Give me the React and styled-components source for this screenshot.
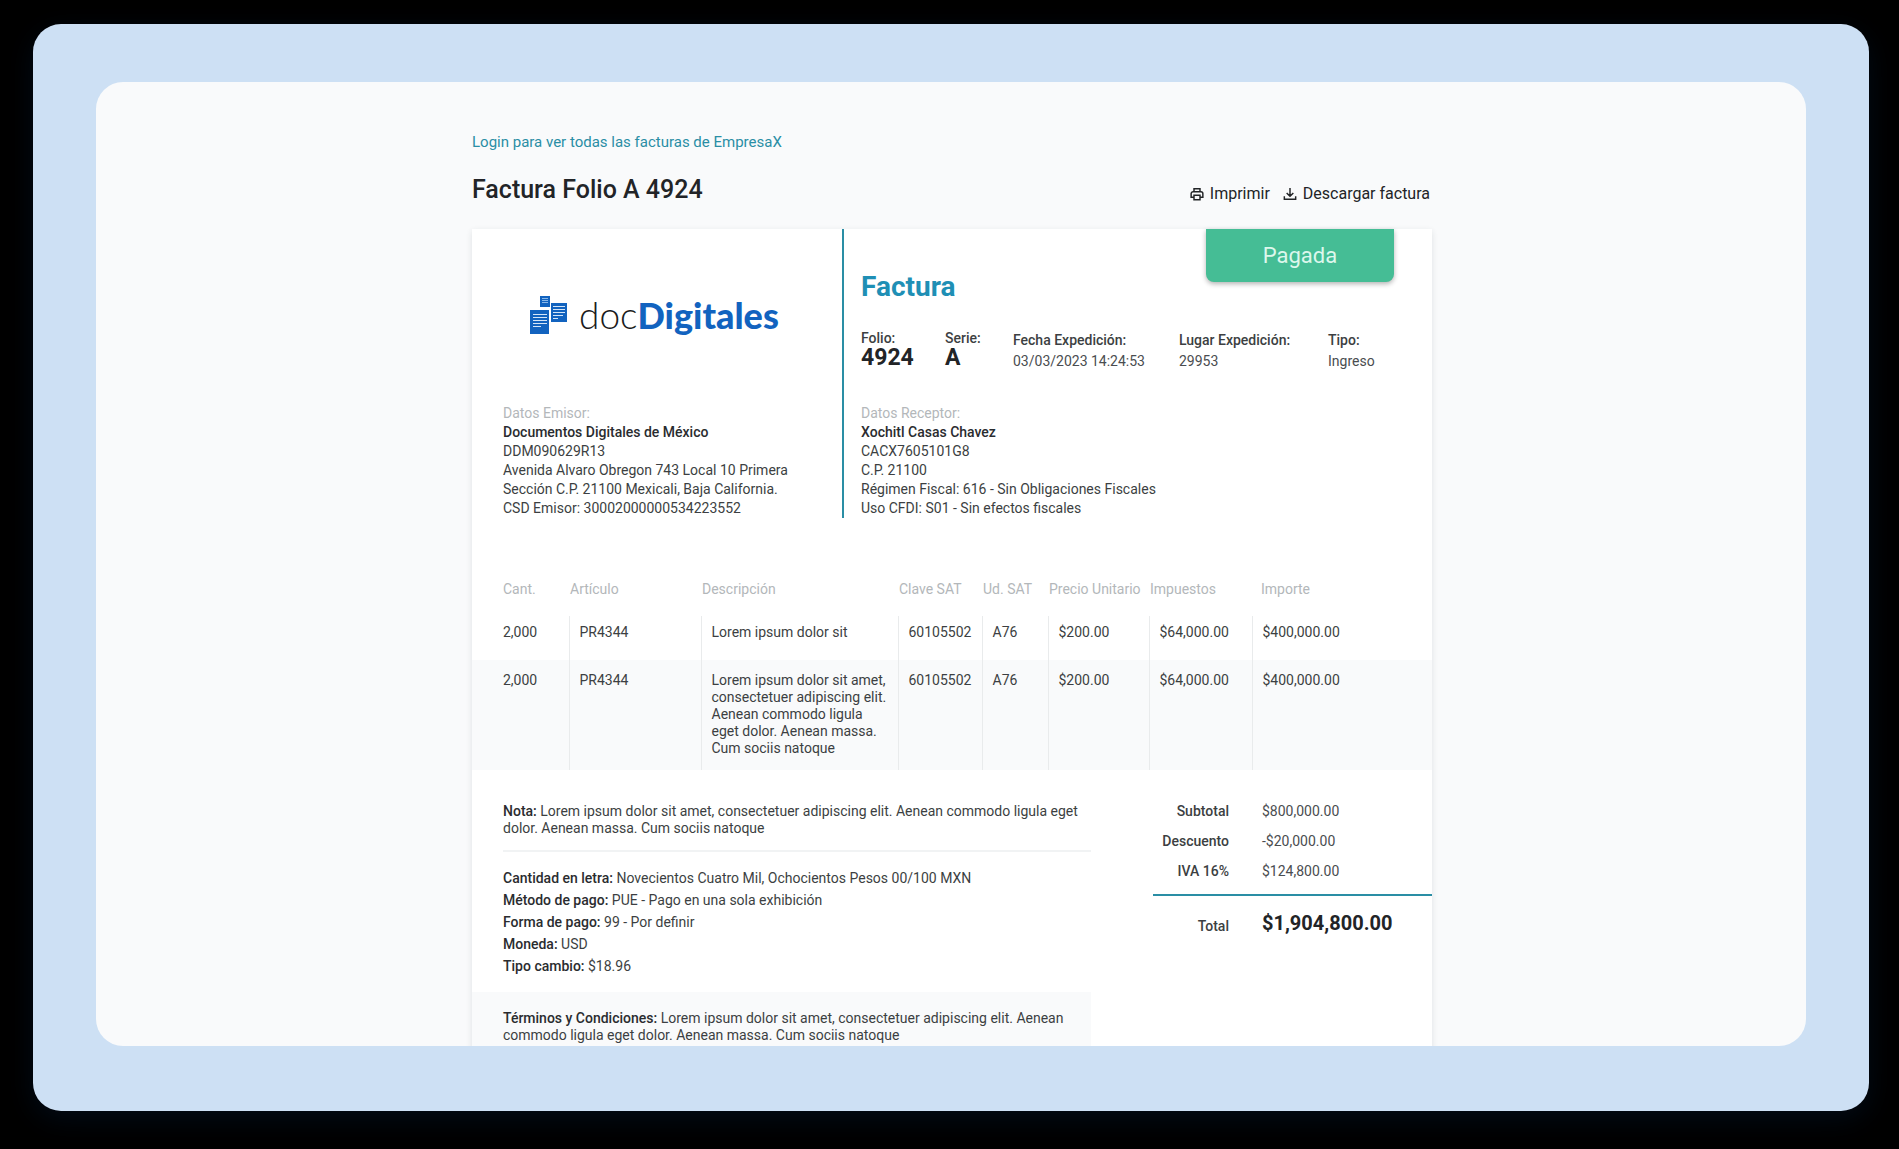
import React from "react";
import styled, { createGlobalStyle } from "styled-components";

const GlobalStyle = createGlobalStyle`
  * {
    box-sizing: border-box;
  }
  body {
    margin: 0;
    background: #000;
    font-family: Roboto, "Liberation Sans", sans-serif;
    color: #222427;
  }
`;

const Stage = styled.div`
  display: flex;
  height: 100vh;
  padding: 24px 30px 38px 33px;
`;

const Frame = styled.div`
  display: flex;
  flex: 1;
  padding: 58px 63px 65px;
  border-radius: 28px;
  background: #cde0f4;
  box-shadow: 0 8px 28px #020b16;
`;

const Screen = styled.main`
  flex: 1;
  padding: 48px 20px 0 22px;
  border-radius: 27px;
  background: #f9fafb;
  overflow: hidden;
`;

const Content = styled.div`
  max-width: 960px;
  margin: 0 auto;
`;

const LoginLink = styled.a`
  display: block;
  font-size: 15px;
  line-height: 24px;
  color: #2a8ea5;
  text-decoration: none;
`;

const TitleBar = styled.header`
  display: flex;
  justify-content: space-between;
  align-items: center;
  padding: 19px 0 22px;
  h1 {
    margin: 0;
    font-size: 25px;
    line-height: 34px;
    font-weight: 500;
  }
`;

const Actions = styled.div`
  display: flex;
  gap: 12px;
  padding: 8px 2px 0 0;
`;

const ActionButton = styled.button`
  display: flex;
  align-items: center;
  gap: 5px;
  padding: 0;
  border: 0;
  background: none;
  font: inherit;
  font-size: 16px;
  line-height: 20px;
  color: #222427;
  cursor: pointer;
`;

const Paper = styled.article`
  background: #fff;
  box-shadow: 0 2px 6px rgba(30, 50, 60, 0.12);
  font-size: 14px;
  color: #3c3f42;
  strong {
    font-weight: 500;
    color: #2a2c2f;
  }
`;

const Top = styled.section`
  display: grid;
  grid-template-columns: 370px 1fr;
  height: 289px;
`;

const Issuer = styled.div`
  display: flex;
  flex-direction: column;
  justify-content: space-between;
  padding: 61px 31px 0;
`;

const Logo = styled.div`
  display: flex;
  align-items: center;
  gap: 12px;
  padding-left: 27px;
  font-family: Lato, "Open Sans", sans-serif;
  font-size: 37px;
  line-height: 50px;
  font-weight: 300;
  color: #1b1b1b;
  b {
    font-weight: 900;
    font-size: 36px;
    color: #1263bf;
  }
`;

const Receiver = styled.div`
  position: relative;
  display: flex;
  flex-direction: column;
  justify-content: space-between;
  padding: 40px 31px 0 17px;
  border-left: 2px solid #2a8ea5;
  h2 {
    margin: 0;
    font-size: 28px;
    line-height: 36px;
    font-weight: 700;
    color: #1f8fb5;
  }
`;

const Badge = styled.span`
  position: absolute;
  top: 0;
  right: 38px;
  width: 188px;
  border-radius: 0 0 8px 8px;
  background: #45bd95;
  box-shadow: 0 2px 5px rgba(0, 0, 0, 0.3);
  font-size: 22px;
  line-height: 53px;
  text-align: center;
  color: #dcf7ec;
`;

const Meta = styled.dl`
  display: grid;
  grid-template-columns: 84px 68px 166px 149px 1fr;
  margin: 0 0 7px;
  dd {
    margin: 0;
  }
`;

const MetaItem = styled.div`
  white-space: nowrap;
  dt {
    font-weight: 500;
    line-height: ${p => (p.$big ? "17px" : "20px")};
  }
  dd {
    font-size: ${p => (p.$big ? "23px" : "14px")};
    font-weight: ${p => (p.$big ? 700 : 400)};
    line-height: 22px;
    color: ${p => (p.$big ? "#222427" : "#4a4d50")};
  }
`;

const Party = styled.address`
  font-style: normal;
  line-height: 19px;
  h3 {
    margin: 0;
    font: inherit;
    color: #b3b7ba;
  }
`;

const Items = styled.table`
  width: 100%;
  margin-top: 60px;
  table-layout: fixed;
  border-collapse: collapse;
  line-height: 17px;
  text-align: left;
  th {
    padding: 3px 0 18px 1px;
    font-weight: 400;
    color: #b3b7ba;
    white-space: nowrap;
  }
  td {
    padding: 12px 0 13px 10px;
    vertical-align: top;
    border-left: 1px solid #e9ebec;
  }
  tbody tr:first-child td {
    padding: 8px 0 19px 10px;
  }
  tbody tr:nth-child(even) {
    background: #f9fafb;
  }
  tbody tr td:nth-child(3) {
    padding-right: 8px;
  }
  th:first-child,
  tbody td:first-child,
  tbody tr:first-child td:first-child {
    padding-left: 31px;
    border-left: 0;
  }
  th:last-child {
    padding-left: 9px;
  }
`;

const Bottom = styled.section`
  display: grid;
  grid-template-columns: 1fr 279px;
  gap: 62px;
  padding-top: 26px;
`;

const Note = styled.p`
  margin: 0 0 0 31px;
  padding: 7px 0 13px;
  border-bottom: 2px solid #f1f3f4;
  line-height: 17px;
`;

const Details = styled.ul`
  margin: 0;
  padding: 15px 0 15px 31px;
  list-style: none;
  line-height: 22px;
`;

const Terms = styled.p`
  margin: 0;
  padding: 18px 16px 18px 31px;
  background: #f9fafb;
  line-height: 17px;
`;

const Totals = styled.dl`
  margin: 0;
`;

const TotalRow = styled.div`
  display: grid;
  grid-template-columns: 76px 1fr;
  gap: 33px;
  line-height: 30px;
  dt {
    font-weight: 500;
    text-align: right;
    white-space: nowrap;
  }
  dd {
    margin: 0;
    color: #4a4d50;
  }
`;

const GrandTotal = styled(TotalRow)`
  margin-top: 8px;
  border-top: 2px solid #2a8ea5;
  dt {
    line-height: 60px;
  }
  dd {
    font-size: 20px;
    font-weight: 700;
    line-height: 54px;
    color: #222427;
  }
`;

const columns = [
  ["Cant.", 97],
  ["Artículo", 132],
  ["Descripción", 197],
  ["Clave SAT", 84],
  ["Ud. SAT", 66],
  ["Precio Unitario", 101],
  ["Impuestos", 103],
  ["Importe", 180]
];

const rows = [
  ["2,000", "PR4344", "Lorem ipsum dolor sit", "60105502", "A76", "$200.00", "$64,000.00", "$400,000.00"],
  [
    "2,000",
    "PR4344",
    "Lorem ipsum dolor sit amet, consectetuer adipiscing elit. Aenean commodo ligula eget dolor. Aenean massa. Cum sociis natoque",
    "60105502",
    "A76",
    "$200.00",
    "$64,000.00",
    "$400,000.00"
  ]
];

const meta = [
  ["Folio:", "4924", true],
  ["Serie:", "A", true],
  ["Fecha Expedición:", "03/03/2023 14:24:53"],
  ["Lugar Expedición:", "29953"],
  ["Tipo:", "Ingreso"]
];

const details = [
  ["Cantidad en letra:", "Novecientos Cuatro Mil, Ochocientos Pesos 00/100 MXN"],
  ["Método de pago:", "PUE - Pago en una sola exhibición"],
  ["Forma de pago:", "99 - Por definir"],
  ["Moneda:", "USD"],
  ["Tipo cambio:", "$18.96"]
];

const totals = [
  ["Subtotal", "$800,000.00"],
  ["Descuento", "-$20,000.00"],
  ["IVA 16%", "$124,800.00"]
];

const LogoMark = () => (
  <svg width="37" height="38" viewBox="0 0 37 38" aria-hidden="true">
    <path fill="#1263bf" d="M0 14h19v24H0zM21 7h16v19H21zM10 0h10v11H10z" />
    <path
      stroke="#d5e6f8"
      strokeWidth="1"
      d="M3 18.500h14M3 21.500h14M3 24.500h14M3 27.500h14M3 30.500h8M23 10.500h12M23 13.500h12M23 16.500h12M23 19.500h10M23 22.500h5"
    />
    <path stroke="#8ab8e8" strokeWidth="1" d="M12 2.500h6M12 4.500h6M12 6.500h6" />
  </svg>
);

const PrintIcon = () => (
  <svg width="16" height="16" viewBox="0 0 24 24" fill="none" stroke="currentColor" strokeWidth="2.2" aria-hidden="true">
    <path d="M7.500 8.500V4h9v4.500M7 17H3.200v-5.500a3 3 0 0 1 3-3h11.600a3 3 0 0 1 3 3V17H17M7.500 14h9v6.500h-9z" />
  </svg>
);

const DownloadIcon = () => (
  <svg width="16" height="16" viewBox="0 0 24 24" fill="none" stroke="currentColor" strokeWidth="2.2" aria-hidden="true">
    <path d="M12 3v12M7 10.500l5 5 5-5M3.500 15.500V20h17v-4.500" />
  </svg>
);

export default class App extends React.Component {
  render() {
    return (
      <Stage>
        <GlobalStyle />
        <Frame>
          <Screen>
            <Content>
              <LoginLink href="#login">Login para ver todas las facturas de EmpresaX</LoginLink>
              <TitleBar>
                <h1>Factura Folio A 4924</h1>
                <Actions>
                  <ActionButton type="button">
                    <PrintIcon />
                    Imprimir
                  </ActionButton>
                  <ActionButton type="button">
                    <DownloadIcon />
                    Descargar factura
                  </ActionButton>
                </Actions>
              </TitleBar>
              <Paper>
                <Top>
                  <Issuer>
                    <Logo>
                      <LogoMark />
                      <span>
                        doc<b>Digitales</b>
                      </span>
                    </Logo>
                    <Party>
                      <h3>Datos Emisor:</h3>
                      <strong>Documentos Digitales de México</strong>
                      <div>DDM090629R13</div>
                      <div>Avenida Alvaro Obregon 743 Local 10 Primera</div>
                      <div>Sección C.P. 21100 Mexicali, Baja California.</div>
                      <div>CSD Emisor: 30002000000534223552</div>
                    </Party>
                  </Issuer>
                  <Receiver>
                    <Badge>Pagada</Badge>
                    <h2>Factura</h2>
                    <Meta>
                      {meta.map(([label, value, big]) => (
                        <MetaItem key={label} $big={big}>
                          <dt>{label}</dt>
                          <dd>{value}</dd>
                        </MetaItem>
                      ))}
                    </Meta>
                    <Party>
                      <h3>Datos Receptor:</h3>
                      <strong>Xochitl Casas Chavez</strong>
                      <div>CACX7605101G8</div>
                      <div>C.P. 21100</div>
                      <div>Régimen Fiscal: 616 - Sin Obligaciones Fiscales</div>
                      <div>Uso CFDI: S01 - Sin efectos fiscales</div>
                    </Party>
                  </Receiver>
                </Top>
                <Items>
                  <colgroup>
                    {columns.map(([name, width]) => (
                      <col key={name} width={width} />
                    ))}
                  </colgroup>
                  <thead>
                    <tr>
                      {columns.map(([name]) => (
                        <th key={name} scope="col">
                          {name}
                        </th>
                      ))}
                    </tr>
                  </thead>
                  <tbody>
                    {rows.map((row, i) => (
                      <tr key={i}>
                        {row.map((cell, j) => (
                          <td key={j}>{cell}</td>
                        ))}
                      </tr>
                    ))}
                  </tbody>
                </Items>
                <Bottom>
                  <div>
                    <Note>
                      <strong>Nota:</strong> Lorem ipsum dolor sit amet, consectetuer adipiscing elit. Aenean commodo
                      ligula eget dolor. Aenean massa. Cum sociis natoque
                    </Note>
                    <Details>
                      {details.map(([label, value]) => (
                        <li key={label}>
                          <strong>{label}</strong> {value}
                        </li>
                      ))}
                    </Details>
                    <Terms>
                      <strong>Términos y Condiciones:</strong> Lorem ipsum dolor sit amet, consectetuer adipiscing elit.
                      Aenean commodo ligula eget dolor. Aenean massa. Cum sociis natoque
                    </Terms>
                  </div>
                  <Totals>
                    {totals.map(([label, value]) => (
                      <TotalRow key={label}>
                        <dt>{label}</dt>
                        <dd>{value}</dd>
                      </TotalRow>
                    ))}
                    <GrandTotal>
                      <dt>Total</dt>
                      <dd>$1,904,800.00</dd>
                    </GrandTotal>
                  </Totals>
                </Bottom>
              </Paper>
            </Content>
          </Screen>
        </Frame>
      </Stage>
    );
  }
}
